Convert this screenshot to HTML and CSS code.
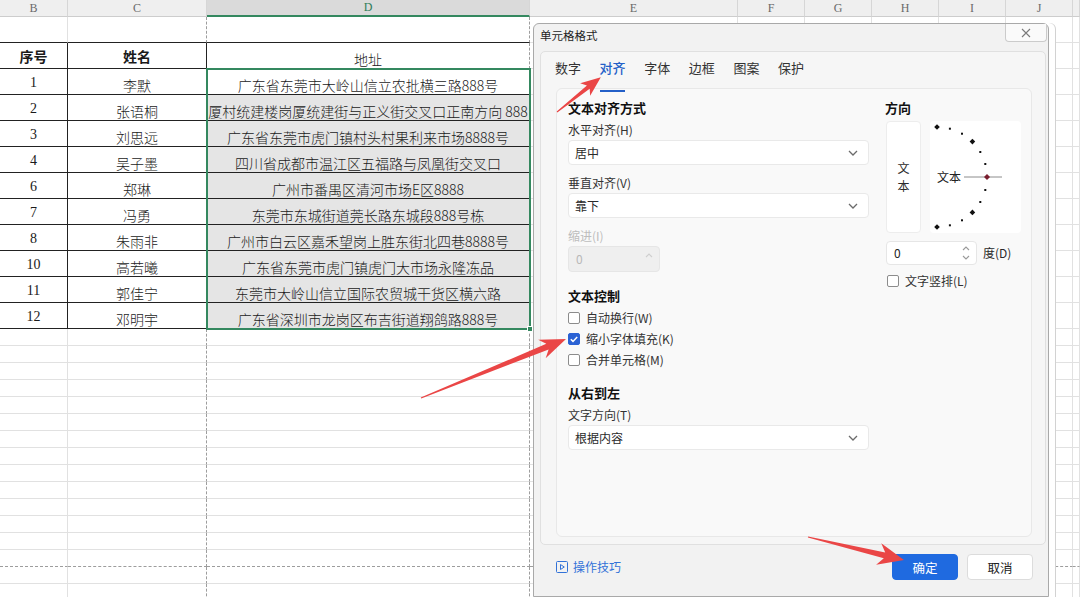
FILE: index.html
```html
<!DOCTYPE html>
<html lang="zh-CN">
<head>
  <meta charset="UTF-8">
  <meta name="viewport" content="width=device-width, initial-scale=1.0">
  <title>单元格格式</title>
  <link rel="stylesheet" href="styles.css">
</head>
<body>
<div class="page">

  <!-- Worksheet behind the dialog -->
  <table class="sheet">
    <colgroup>
      <col class="w-b"><col class="w-c"><col class="w-d"><col class="w-e">
      <col class="w-f"><col class="w-f"><col class="w-f"><col class="w-f"><col class="w-f"><col class="w-k">
    </colgroup>
    <thead>
      <tr class="col-head">
        <th>B</th><th>C</th><th class="sel">D</th><th>E</th><th>F</th><th>G</th><th>H</th><th>I</th><th>J</th><th></th>
      </tr>
    </thead>
    <tbody>
      <tr class="blank"><td class="b"></td><td class="c"></td><td class="d"></td><td></td><td></td><td></td><td></td><td></td><td></td><td></td></tr>
      <tr class="head"><td class="b">序号</td><td class="c">姓名</td><td class="d">地址</td><td></td><td></td><td></td><td></td><td></td><td></td><td></td></tr>
      <tr class="data"><td class="b">1</td><td class="c">李默</td><td class="d">广东省东莞市大岭山信立农批横三路888号</td><td></td><td></td><td></td><td></td><td></td><td></td><td></td></tr>
      <tr class="data"><td class="b">2</td><td class="c">张语桐</td><td class="d hl">厦村统建楼岗厦统建街与正义街交叉口正南方向 888</td><td></td><td></td><td></td><td></td><td></td><td></td><td></td></tr>
      <tr class="data"><td class="b">3</td><td class="c">刘思远</td><td class="d hl">广东省东莞市虎门镇村头村果利来市场8888号</td><td></td><td></td><td></td><td></td><td></td><td></td><td></td></tr>
      <tr class="data"><td class="b">4</td><td class="c">吴子墨</td><td class="d hl">四川省成都市温江区五福路与凤凰街交叉口</td><td></td><td></td><td></td><td></td><td></td><td></td><td></td></tr>
      <tr class="data"><td class="b">6</td><td class="c">郑琳</td><td class="d hl">广州市番禺区清河市场E区8888</td><td></td><td></td><td></td><td></td><td></td><td></td><td></td></tr>
      <tr class="data"><td class="b">7</td><td class="c">冯勇</td><td class="d hl">东莞市东城街道莞长路东城段888号栋</td><td></td><td></td><td></td><td></td><td></td><td></td><td></td></tr>
      <tr class="data"><td class="b">8</td><td class="c">朱雨非</td><td class="d hl">广州市白云区嘉禾望岗上胜东街北四巷8888号</td><td></td><td></td><td></td><td></td><td></td><td></td><td></td></tr>
      <tr class="data"><td class="b">10</td><td class="c">高若曦</td><td class="d hl">广东省东莞市虎门镇虎门大市场永隆冻品</td><td></td><td></td><td></td><td></td><td></td><td></td><td></td></tr>
      <tr class="data"><td class="b">11</td><td class="c">郭佳宁</td><td class="d hl">东莞市大岭山信立国际农贸城干货区横六路</td><td></td><td></td><td></td><td></td><td></td><td></td><td></td></tr>
      <tr class="data"><td class="b">12</td><td class="c">邓明宇</td><td class="d hl">广东省深圳市龙岗区布吉街道翔鸽路888号</td><td></td><td></td><td></td><td></td><td></td><td></td><td></td></tr>
      <tr class="empty"><td class="b"></td><td class="c"></td><td class="d"></td><td></td><td></td><td></td><td></td><td></td><td></td><td></td></tr>
      <tr class="empty"><td class="b"></td><td class="c"></td><td class="d"></td><td></td><td></td><td></td><td></td><td></td><td></td><td></td></tr>
      <tr class="empty"><td class="b"></td><td class="c"></td><td class="d"></td><td></td><td></td><td></td><td></td><td></td><td></td><td></td></tr>
      <tr class="empty"><td class="b"></td><td class="c"></td><td class="d"></td><td></td><td></td><td></td><td></td><td></td><td></td><td></td></tr>
      <tr class="empty"><td class="b"></td><td class="c"></td><td class="d"></td><td></td><td></td><td></td><td></td><td></td><td></td><td></td></tr>
      <tr class="empty"><td class="b"></td><td class="c"></td><td class="d"></td><td></td><td></td><td></td><td></td><td></td><td></td><td></td></tr>
      <tr class="empty"><td class="b"></td><td class="c"></td><td class="d"></td><td></td><td></td><td></td><td></td><td></td><td></td><td></td></tr>
      <tr class="empty"><td class="b"></td><td class="c"></td><td class="d"></td><td></td><td></td><td></td><td></td><td></td><td></td><td></td></tr>
      <tr class="empty"><td class="b"></td><td class="c"></td><td class="d"></td><td></td><td></td><td></td><td></td><td></td><td></td><td></td></tr>
      <tr class="empty"><td class="b"></td><td class="c"></td><td class="d"></td><td></td><td></td><td></td><td></td><td></td><td></td><td></td></tr>
      <tr class="empty"><td class="b"></td><td class="c"></td><td class="d"></td><td></td><td></td><td></td><td></td><td></td><td></td><td></td></tr>
      <tr class="empty"><td class="b"></td><td class="c"></td><td class="d"></td><td></td><td></td><td></td><td></td><td></td><td></td><td></td></tr>
      <tr class="empty"><td class="b"></td><td class="c"></td><td class="d"></td><td></td><td></td><td></td><td></td><td></td><td></td><td></td></tr>
      <tr class="empty pb"><td class="b"></td><td class="c"></td><td class="d"></td><td></td><td></td><td></td><td></td><td></td><td></td><td></td></tr>
      <tr class="empty"><td class="b"></td><td class="c"></td><td class="d"></td><td></td><td></td><td></td><td></td><td></td><td></td><td></td></tr>
      <tr class="empty"><td class="b"></td><td class="c"></td><td class="d"></td><td></td><td></td><td></td><td></td><td></td><td></td><td></td></tr>
    </tbody>
  </table>

  <!-- selection frame over D2:D13 -->
  <div class="selbox"><span class="handle"></span></div>

  <!-- Format cells dialog -->
  <div class="dialog">
    <div class="dlg-title">
      <span>单元格格式</span>
      <button class="dlg-close" type="button">
        <svg width="10" height="10" viewBox="0 0 10 10"><path d="M1 1l8 8M9 1L1 9" stroke="#7a7a7a" stroke-width="1.1" fill="none"/></svg>
      </button>
    </div>

    <div class="tab-panel">
      <div class="tabs">
        <span class="tab">数字</span>
        <span class="tab active">对齐</span>
        <span class="tab">字体</span>
        <span class="tab">边框</span>
        <span class="tab">图案</span>
        <span class="tab">保护</span>
      </div>

      <div class="tab-body">
        <div class="col-left">
          <div class="sec-title">文本对齐方式</div>
          <div class="lbl">水平对齐(H)</div>
          <div class="select">
            <span>居中</span>
            <svg class="chev" width="10" height="6" viewBox="0 0 10 6"><path d="M1 1l4 4 4-4" stroke="#6b6b6b" stroke-width="1.3" fill="none"/></svg>
          </div>
          <div class="lbl">垂直对齐(V)</div>
          <div class="select">
            <span>靠下</span>
            <svg class="chev" width="10" height="6" viewBox="0 0 10 6"><path d="M1 1l4 4 4-4" stroke="#6b6b6b" stroke-width="1.3" fill="none"/></svg>
          </div>
          <div class="lbl disabled">缩进(I)</div>
          <div class="spin indent">
            <span>0</span>
            <svg width="8" height="14" viewBox="0 0 8 14"><path d="M1 5l3-3 3 3" stroke="#cfcfcf" stroke-width="1.1" fill="none"/></svg>
          </div>

          <div class="sec-title">文本控制</div>
          <div class="check-list">
            <label class="check"><span class="box"></span>自动换行(W)</label>
            <label class="check"><span class="box on"><svg width="12" height="12" viewBox="0 0 12 12"><path d="M2.8 6.2l2.2 2.2 4.2-4.4" stroke="#fff" stroke-width="1.5" fill="none"/></svg></span>缩小字体填充(K)</label>
            <label class="check"><span class="box"></span>合并单元格(M)</label>
          </div>

          <div class="sec-title">从右到左</div>
          <div class="lbl">文字方向(T)</div>
          <div class="select">
            <span>根据内容</span>
            <svg class="chev" width="10" height="6" viewBox="0 0 10 6"><path d="M1 1l4 4 4-4" stroke="#6b6b6b" stroke-width="1.3" fill="none"/></svg>
          </div>
        </div>

        <div class="col-right">
          <div class="sec-title">方向</div>
          <div class="orient">
            <div class="vtext">文<br>本</div>
            <svg class="dial" width="91" height="112" viewBox="0 0 91 112">
              <g fill="#111">
                <polygon points="7,3.2 9.8,6 7,8.8 4.2,6"/>
                <polygon points="42.4,17.8 45.2,20.6 42.4,23.4 39.6,20.6"/>
                <polygon points="42.4,88.6 45.2,91.4 42.4,94.2 39.6,91.4"/>
                <polygon points="7,103.2 9.8,106 7,108.8 4.2,106"/>
                <rect x="18.9" y="6.7" width="2" height="2"/>
                <rect x="31" y="11.7" width="2" height="2"/>
                <rect x="49.3" y="30" width="2" height="2"/>
                <rect x="54.3" y="42" width="2" height="2"/>
                <rect x="54.3" y="68" width="2" height="2"/>
                <rect x="49.3" y="80" width="2" height="2"/>
                <rect x="31" y="98.3" width="2" height="2"/>
                <rect x="18.9" y="103.3" width="2" height="2"/>
              </g>
              <text x="7" y="60.5" class="dial-text">文本</text>
              <line x1="34" y1="56" x2="72" y2="56" stroke="#8c8c8c" stroke-width="1"/>
              <polygon points="57,53 60,56 57,59 54,56" fill="#7a1f2f"/>
            </svg>
          </div>
          <div class="deg-row">
            <div class="spin deg">
              <span>0</span>
              <svg width="8" height="16" viewBox="0 0 8 16"><path d="M1 5l3-3 3 3M1 11l3 3 3-3" stroke="#9a9a9a" stroke-width="1.1" fill="none"/></svg>
            </div>
            <span>度(D)</span>
          </div>
          <label class="check vert"><span class="box"></span>文字竖排(L)</label>
        </div>
      </div>
    </div>

    <div class="dlg-foot">
      <a class="tips">
        <svg width="12" height="12" viewBox="0 0 12 12"><rect x="0.5" y="0.5" width="11" height="11" rx="1" fill="none" stroke="#3272d8"/><path d="M4.5 3.5v5l3.8-2.5z" fill="none" stroke="#3272d8" stroke-linejoin="round"/></svg>
        操作技巧
      </a>
      <div class="btns">
        <button class="btn primary" type="button">确定</button>
        <button class="btn" type="button">取消</button>
      </div>
    </div>
  </div>

  <!-- red annotation arrows -->
  <svg class="marks" width="1080" height="597" viewBox="0 0 1080 597">
    <g fill="#ea4646">
      <path d="M0 -0.5L40 -2.2L36 -8L56 0L36 8L40 2.2L0 0.5Z" transform="translate(557 112) rotate(-38.5)"/>
      <path d="M0 -0.6L136.5 -3L130.5 -10L156.5 0L130.5 10L136.5 3L0 0.6Z" transform="translate(421 398) rotate(-22.1)"/>
      <path d="M0 -0.6L78.7 -3L72.7 -11L98.7 0L72.7 11L78.7 3L0 0.6Z" transform="translate(808 537) rotate(13.5)"/>
    </g>
  </svg>

</div>
</body>
</html>
```

FILE: styles.css
```css
* {
  box-sizing: border-box;
}

body {
  margin: 0;
  font-family: "Noto Sans CJK SC", "Noto Sans", sans-serif;
  color: #222;
  background: #fff;
}

.page {
  position: relative;
  width: 1080px;
  height: 597px;
  overflow: hidden;
}

/* ---------- worksheet ---------- */
.sheet {
  border-collapse: separate;
  border-spacing: 0;
  table-layout: fixed;
  width: 1080px;
  font-size: 14px;
  font-weight: 300;
  color: #1a1a1a;
}

.w-b { width: 68px; }
.w-c { width: 139px; }
.w-d { width: 323px; }
.w-e { width: 208px; }
.w-f { width: 67px; }
.w-k { width: 7px; }

.sheet th,
.sheet td {
  padding: 0;
  text-align: center;
  white-space: nowrap;
  overflow: hidden;
  border-right: 1px solid #e1e1e1;
  border-bottom: 1px solid #e1e1e1;
}

.col-head th {
  height: 17px;
  font-family: "Liberation Serif", serif;
  font-weight: normal;
  font-size: 12px;
  line-height: 15px;
  color: #6a6a6a;
  background: #efefef;
  border-right-color: #d6d6d6;
  border-bottom-color: #cdcdcd;
}

.col-head th.sel {
  background: #dadada;
  color: #2f7d58;
  border-bottom: 2px solid #34885f;
}

.blank,
.head,
.data {
  height: 26px;
}

.empty {
  height: 17px;
}

/* table outline */
.blank td.b,
.blank td.c,
.blank td.d {
  border-bottom-color: #222;
}

.head td.b,
.head td.c,
.data td.b,
.data td.c {
  border-right-color: #222;
  border-bottom-color: #222;
}

.head td.d,
.data td.d {
  border-bottom-color: #222;
}

/* page break lines */
.blank td.c,
.empty td.c,
.blank td.d,
.head td.d,
.empty td.d {
  border-right: 1px dashed #9d9d9d;
}

.pb td {
  border-bottom: 1px dashed #9d9d9d;
}

.head td.b,
.head td.c {
  font-weight: bold;
  vertical-align: middle;
}

.head td.d,
.data td.c,
.data td.d {
  vertical-align: bottom;
  line-height: 17px;
}

.data td.b {
  font-family: "Liberation Serif", serif;
  vertical-align: middle;
  padding-top: 2px;
}

.data td.hl {
  background: #e5e5e5;
}

.selbox {
  position: absolute;
  left: 206px;
  top: 68px;
  width: 325px;
  height: 262px;
  border: 2px solid #34885f;
}

.handle {
  position: absolute;
  right: -4px;
  bottom: -4px;
  width: 6px;
  height: 6px;
  background: #34885f;
  border: 1px solid #fff;
}

/* ---------- dialog ---------- */
.dialog {
  position: absolute;
  left: 533px;
  top: 23px;
  width: 516px;
  height: 574px;
  display: flex;
  flex-direction: column;
  background: #f2f2f2;
  border: 1px solid #a9a9a9;
  border-radius: 6px 6px 0 0;
  box-shadow: 6px 0 0 #fff, 7px 0 0 #d2d2d2;
  font-size: 12px;
  color: #2a2a2a;
}

.dlg-title {
  height: 27px;
  display: flex;
  justify-content: space-between;
  align-items: flex-start;
  padding: 0 1px 0 6px;
}

.dlg-title span {
  margin-top: 3px;
  font-size: 11.5px;
  line-height: 16px;
  color: #1e1e1e;
}

.dlg-close {
  width: 42px;
  height: 18px;
  padding: 0;
  display: flex;
  align-items: center;
  justify-content: center;
  background: #fafafa;
  border: 1px solid #cbcbcb;
  border-top: none;
  border-radius: 0 0 4px 4px;
}

.tab-panel {
  margin: 0 2px 0 6px;
  padding-bottom: 7px;
  background: #f6f6f6;
  border: 1px solid #e0e0e0;
  border-radius: 5px;
}

.tabs {
  display: flex;
  gap: 18.6px;
  height: 36px;
  padding: 7px 0 0 14px;
}

.tab {
  position: relative;
  font-size: 13px;
  line-height: 18px;
  color: #333;
}

.tab.active {
  color: #2460c8;
  font-weight: 500;
}

.tab.active::after {
  content: "";
  position: absolute;
  left: 0;
  right: 1px;
  bottom: -4px;
  height: 2px;
  background: #2460c8;
}

.tab-body {
  height: 449px;
  margin: 0 13px 0 15px;
  padding: 10px 0 0 11px;
  display: flex;
  gap: 16px;
  background: #f9f9f9;
  border: 1px solid #e8e8e8;
  border-radius: 6px;
}

.col-left {
  width: 301px;
}

.col-right {
  width: 136px;
}

.sec-title {
  margin-top: 15px;
  font-size: 13px;
  font-weight: bold;
  line-height: 18px;
  color: #111;
}

.sec-title:first-child {
  margin-top: 0;
}

.check-list + .sec-title {
  margin-top: 14px;
}

.lbl {
  margin-top: 9px;
  line-height: 18px;
  color: #333;
}

.sec-title + .lbl {
  margin-top: 4px;
}

.lbl.disabled {
  color: #bdbdbd;
}

.select {
  height: 25px;
  margin-top: 1px;
  display: flex;
  align-items: center;
  justify-content: space-between;
  padding: 0 10px 0 6px;
  background: #fff;
  border: 1px solid #e9e9e9;
  border-radius: 4px;
  line-height: 18px;
}

.spin {
  height: 26px;
  display: flex;
  align-items: center;
  justify-content: space-between;
  padding: 0 6px 0 7px;
  border: 1px solid #e6e6e6;
  border-radius: 4px;
  line-height: 18px;
}

.spin.indent {
  width: 92px;
  margin-top: 1px;
  background: #efefef;
  color: #b8b8b8;
}

.check-list {
  margin-top: 2px;
}

.check {
  height: 21px;
  display: flex;
  align-items: center;
  gap: 6px;
  line-height: 18px;
  color: #333;
}

.box {
  width: 12px;
  height: 12px;
  display: flex;
  background: #fff;
  border: 1px solid #8c8c8c;
  border-radius: 2px;
}

.box.on {
  background: #2b62d4;
  border-color: #2b62d4;
}

.box.on svg {
  margin: -1px;
}

.orient {
  margin-top: 4px;
  height: 112px;
  display: flex;
  gap: 9px;
  padding-left: 1px;
}

.vtext {
  width: 35px;
  display: flex;
  align-items: center;
  justify-content: center;
  text-align: center;
  line-height: 18px;
  background: #fff;
  border: 1px solid #ededed;
  border-radius: 4px;
}

.dial {
  background: #fff;
  border-radius: 4px;
}

.dial-text {
  font-family: "Noto Sans CJK SC", sans-serif;
  font-size: 12px;
  fill: #222;
}

.deg-row {
  margin-top: 8px;
  padding-left: 1px;
  display: flex;
  align-items: center;
  gap: 6px;
  line-height: 18px;
}

.spin.deg {
  width: 91px;
  height: 24px;
  background: #fff;
  color: #222;
}

.check.vert {
  margin-top: 6px;
  padding-left: 2px;
  height: 19px;
}

.dlg-foot {
  display: flex;
  justify-content: space-between;
  align-items: center;
  padding: 9px 15px 0 22px;
}

.tips {
  display: flex;
  align-items: center;
  gap: 5px;
  color: #3272d8;
  line-height: 18px;
}

.btns {
  display: flex;
  gap: 9px;
}

.btn {
  width: 66px;
  height: 26px;
  padding: 0;
  font: inherit;
  font-size: 12.5px;
  color: #222;
  background: #fff;
  border: 1px solid #dcdcdc;
  border-radius: 4px;
}

.btn.primary {
  color: #fff;
  background: #1f6ae0;
  border-color: #1f6ae0;
}

/* annotation overlay */
.marks {
  position: absolute;
  left: 0;
  top: 0;
  pointer-events: none;
}
```
